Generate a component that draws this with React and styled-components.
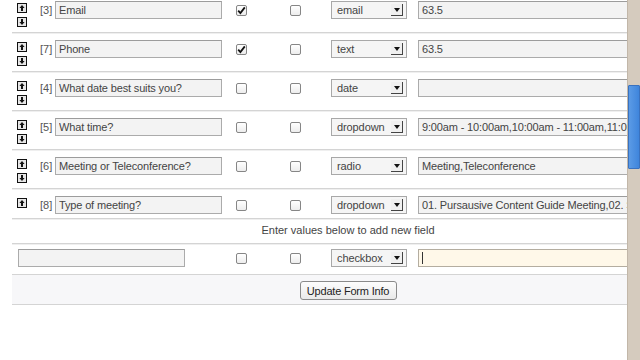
import React from "react";
import styled, { createGlobalStyle } from "styled-components";

const Global = createGlobalStyle`
  html, body { margin: 0; padding: 0; background: #fff; }
  body { font-family: "Liberation Sans", Arial, sans-serif; font-size: 11px; color: #333; }
  #root { height: 360px; }
`;

const Page = styled.div`
  display: flex;
  width: 640px;
  height: 360px;
  overflow: hidden;
  background: #fff;
`;

const Main = styled.div`
  flex: 1;
  overflow: hidden;
`;

const Table = styled.div`
  width: 672px;
  margin: -6px 0 0 12px;
`;

const Row = styled.div`
  display: grid;
  grid-template-columns: 28px 15px 181px 54px 41px 87px 1fr;
  align-items: start;
  padding: 7px 0 ${(p) => (p.$last ? 4 : 5)}px;
  border-bottom: 1px solid #d4d4d4;
  box-shadow: 0 1px 0 #efefef;
`;

const Arrows = styled.div`
  display: flex;
  flex-direction: column;
  gap: 4px;
  padding: 2px 0 0 5px;
`;

const Index = styled.span`
  color: #555;
  line-height: 18px;
  font-size: 11px;
`;

const TextBox = styled.input`
  box-sizing: border-box;
  width: ${(p) => p.$w || 167}px;
  height: 18px;
  margin: 0;
  padding: 0 3px;
  border: 1px solid #ababab;
  border-top-color: #9c9c9c;
  background: #f3f3f3;
  font-family: "Liberation Sans", Arial, sans-serif;
  font-size: 11px;
  letter-spacing: -0.15px;
  color: #444;
  outline: none;
`;

const Box = styled.span`
  display: inline-flex;
  align-items: center;
  justify-content: center;
  box-sizing: border-box;
  width: 11px;
  height: 11px;
  margin-top: 4px;
  border: 1px solid #868686;
  border-radius: 2px;
  background: linear-gradient(#ffffff, #ededed);
`;

const Select = styled.div`
  box-sizing: border-box;
  width: 76px;
  height: 18px;
  display: flex;
  align-items: center;
  justify-content: space-between;
  padding: 0 3px 0 5px;
  border: 1px solid #a8a8a8;
  background: #f5f5f5;
  color: #444;
  font-size: 11px;
  letter-spacing: -0.1px;
`;

const SelectButton = styled.span`
  box-sizing: border-box;
  width: 12px;
  height: 12px;
  display: flex;
  align-items: center;
  justify-content: center;
  border-right: 1px solid #444;
  border-bottom: 1px solid #444;
  background: #f0f0f0;
`;

const NoteRow = styled.div`
  text-align: center;
  color: #444;
  font-size: 11px;
  line-height: 13px;
  padding: 5px 0 6px;
  border-bottom: 1px solid #d4d4d4;
  box-shadow: 0 1px 0 #efefef;
`;

const NewRow = styled(Row)`
  padding: 5px 0 7px;
`;

const NameCell = styled.div`
  grid-column: 1 / 4;
  padding-left: 6px;
`;

const ValueField = styled.div`
  box-sizing: border-box;
  width: 258px;
  height: 18px;
  display: flex;
  align-items: center;
  padding-left: 3px;
  border: 1px solid #b4ada0;
  background: #fff8e9;
`;

const Caret = styled.span`
  display: inline-block;
  width: 1px;
  height: 12px;
  background: #333;
`;

const ActionRow = styled.div`
  display: flex;
  justify-content: center;
  padding: 6px 0 4px;
  background: #f7f7f9;
  border-bottom: 1px solid #d4d4d4;
`;

const Button = styled.button`
  box-sizing: border-box;
  width: 97px;
  height: 19px;
  padding: 0;
  margin: 0;
  border: 1px solid #8a8a8a;
  border-radius: 3px;
  background: linear-gradient(#fdfdfd, #e9e9e9);
  font-family: "Liberation Sans", Arial, sans-serif;
  font-size: 11px;
  letter-spacing: -0.2px;
  color: #222;
`;

const ScrollBar = styled.div`
  width: 13px;
  flex: none;
  box-sizing: border-box;
  background: #d5cbbe;
  border-left: 1px solid #c2b7a9;
  padding-top: 85px;
`;

const Thumb = styled.div`
  height: 82px;
  background: linear-gradient(90deg, #5b9be6, #3f85dc);
  border: 1px solid #3a72bf;
  border-radius: 1px;
`;

const ArrowIcon = ({ down }) => (
  <svg width="10" height="10" viewBox="0 0 10 10" style={down ? { transform: "rotate(180deg)" } : undefined}>
    <rect x="0.5" y="0.5" width="9" height="9" fill="#e6e6e6" stroke="#111" />
    <path d="M5 2 L7.6 5 H6 V8 H4 V5 H2.4 Z" fill="#111" />
  </svg>
);

const Check = ({ checked }) => (
  <Box>
    {checked && (
      <svg width="9" height="9" viewBox="0 0 9 9">
        <path d="M1.2 4.6 L3.4 7 L7.8 1.4" fill="none" stroke="#111" strokeWidth="1.8" />
      </svg>
    )}
  </Box>
);

const Dropdown = ({ value }) => (
  <Select>
    <span>{value}</span>
    <SelectButton>
      <svg width="6" height="4" viewBox="0 0 6 4">
        <path d="M0 0 H6 L3 4 Z" fill="#111" />
      </svg>
    </SelectButton>
  </Select>
);

const fields = [
  { id: 3, name: "Email", req: true, type: "email", value: "63.5", down: true },
  { id: 7, name: "Phone", req: true, type: "text", value: "63.5", down: true },
  { id: 4, name: "What date best suits you?", req: false, type: "date", value: "", down: true },
  { id: 5, name: "What time?", req: false, type: "dropdown", value: "9:00am - 10:00am,10:00am - 11:00am,11:00am - 12:00pm", down: true },
  { id: 6, name: "Meeting or Teleconference?", req: false, type: "radio", value: "Meeting,Teleconference", down: true },
  { id: 8, name: "Type of meeting?", req: false, type: "dropdown", value: "01. Pursausive Content Guide Meeting,02. Strategy Meeting", down: false },
];

export default function App() {
  return (
    <>
      <Global />
      <Page>
        <Main>
          <Table>
            {fields.map((f) => (
              <Row key={f.id} $last={!f.down}>
                <Arrows>
                  <ArrowIcon />
                  {f.down && <ArrowIcon down />}
                </Arrows>
                <Index>[{f.id}]</Index>
                <div>
                  <TextBox readOnly value={f.name} />
                </div>
                <div>
                  <Check checked={f.req} />
                </div>
                <div>
                  <Check />
                </div>
                <Dropdown value={f.type} />
                <TextBox readOnly value={f.value} $w={258} />
              </Row>
            ))}
            <NoteRow>Enter values below to add new field</NoteRow>
            <NewRow>
              <NameCell>
                <TextBox readOnly value="" />
              </NameCell>
              <div>
                <Check />
              </div>
              <div>
                <Check />
              </div>
              <Dropdown value="checkbox" />
              <ValueField>
                <Caret />
              </ValueField>
            </NewRow>
            <ActionRow>
              <Button type="button">Update Form Info</Button>
            </ActionRow>
          </Table>
        </Main>
        <ScrollBar>
          <Thumb />
        </ScrollBar>
      </Page>
    </>
  );
}
